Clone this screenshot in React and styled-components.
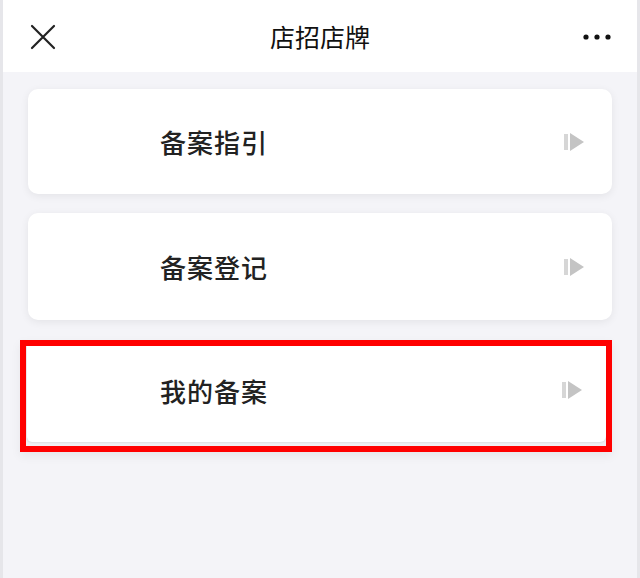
import React from 'react';
import styled, { createGlobalStyle } from 'styled-components';

const GlobalStyle = createGlobalStyle`
  html, body {
    margin: 0;
    padding: 0;
    background: #f4f4f8;
    font-family: "Noto Sans CJK SC", "Noto Sans", sans-serif;
  }
`;

const Page = styled.div`
  width: 640px;
  height: 578px;
  box-sizing: border-box;
  border-left: 3px solid #e6e6ea;
  border-right: 3px solid #e6e6ea;
  background: #f4f4f8;
  display: flex;
  flex-direction: column;
`;

const Header = styled.header`
  height: 72px;
  background: #fff;
  display: grid;
  grid-template-columns: 80px 1fr 80px;
  align-items: center;
  flex-shrink: 0;
`;

const Title = styled.h1`
  margin: 0;
  text-align: center;
  font-size: 25px;
  font-weight: 400;
  color: #111;
`;

const IconBtn = styled.div`
  display: flex;
  align-items: center;
  justify-content: ${({ $right }) => ($right ? 'flex-end' : 'flex-start')};
  padding: ${({ $right }) => ($right ? '0 26px 0 0' : '0 0 0 27px')};
  padding-top: 1px;
`;

const List = styled.div`
  display: flex;
  flex-direction: column;
  gap: 19px;
  padding: 17px 25px 0 25px;
`;

const Card = styled.div`
  height: ${({ $h }) => $h || 105}px;
  background: #fff;
  border-radius: 10px;
  box-shadow: 0 2px 8px rgba(0, 0, 0, 0.07);
  display: flex;
  align-items: center;
  justify-content: space-between;
  padding: 0 27px 0 132px;
  box-sizing: border-box;
`;

const Label = styled.span`
  font-size: 26px;
  font-weight: 500;
  color: #222;
  letter-spacing: 1px;
`;

const Highlight = styled.div`
  margin: 1px 0 0 -8px;
  border: 6px solid #ff0000;
  background: #f0f0f3;
  padding-bottom: 4px;
  box-shadow: 0 4px 10px rgba(0, 0, 0, 0.06);

  ${Card} {
    border-radius: 0 0 6px 6px;
    border-left: 1px solid #e8e8ec;
    box-shadow: 0 1px 2px rgba(0, 0, 0, 0.08);
    padding: 0 23px 8px 133px;
  }
`;

const CloseIcon = () => (
  <svg width="26" height="26" viewBox="0 0 26 26">
    <path d="M2 2 L24 24 M24 2 L2 24" stroke="#222" strokeWidth="2.2" strokeLinecap="round" />
  </svg>
);

const MoreIcon = () => (
  <svg width="28" height="6" viewBox="0 0 28 6">
    <circle cx="3" cy="3" r="2.6" fill="#111" />
    <circle cx="14" cy="3" r="2.6" fill="#111" />
    <circle cx="25" cy="3" r="2.6" fill="#111" />
  </svg>
);

const Arrow = () => (
  <svg width="21" height="18" viewBox="0 0 21 18">
    <rect x="0" y="1" width="4" height="16" fill="#d6d6d6" />
    <path d="M6 0 L20 9 L6 18 Z" fill="#c4c4c4" />
  </svg>
);

const items = ['备案指引', '备案登记'];

const App = () => {
  return (
    <>
      <GlobalStyle />
      <Page>
        <Header>
          <IconBtn><CloseIcon /></IconBtn>
          <Title>店招店牌</Title>
          <IconBtn $right><MoreIcon /></IconBtn>
        </Header>
        <List>
          {items.map((t, i) => (
            <Card key={t} $h={i === 0 ? 105 : 107}>
              <Label>{t}</Label>
              <Arrow />
            </Card>
          ))}
          <Highlight>
            <Card $h={96}>
              <Label>我的备案</Label>
              <Arrow />
            </Card>
          </Highlight>
        </List>
      </Page>
    </>
  );
};

export default App;
